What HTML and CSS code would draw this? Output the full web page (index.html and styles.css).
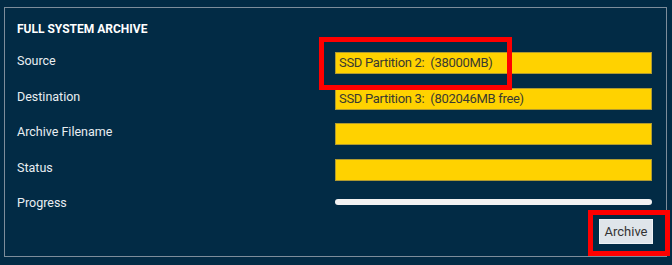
FILE: index.html
```html
<!DOCTYPE html>
<html lang="en">
<head>
    <meta charset="UTF-8">
    <meta name="viewport" content="width=device-width, initial-scale=1.0">
    <title>Full System Archive</title>
    <link rel="stylesheet" href="styles.css">
</head>
<body>
    <div class="panel">
        <h1 class="panel-title">FULL SYSTEM ARCHIVE</h1>

        <div class="form">
            <label class="form-label">Source</label>
            <div class="field">SSD Partition 2:&nbsp; (38000MB)</div>

            <label class="form-label">Destination</label>
            <div class="field">SSD Partition 3:&nbsp; (802046MB free)</div>

            <label class="form-label">Archive Filename</label>
            <div class="field"></div>

            <label class="form-label">Status</label>
            <div class="field"></div>

            <label class="form-label">Progress</label>
            <div class="progress"><div class="progress-fill" style="width: 100%"></div></div>
        </div>

        <div class="actions">
            <button class="btn">Archive</button>
        </div>
    </div>

    <!-- highlight annotations -->
    <div class="mark mark-source"></div>
    <div class="mark mark-button"></div>
</body>
</html>
```

FILE: styles.css
```css
body {
    margin: 0;
    background-color: #022b45;
    font-family: Roboto, "Liberation Sans", sans-serif;
    color: #e9eef2;
}
.panel {
    margin: 7px 0 0 4px;
    width: 636px;
    height: 235px;
    padding: 13px 13px 0 12px;
    border: 1px solid #7d8d9b;
}
.panel-title {
    margin: 0 0 15px 0;
    font-size: 12px;
    line-height: 16px;
    font-weight: 700;
    color: #ffffff;
}
.form {
    display: grid;
    grid-template-columns: 318px 317px;
    grid-auto-rows: 22px;
    row-gap: 13.5px;
}
.form-label {
    font-size: 12.5px;
    line-height: 18px;
}
.field {
    box-sizing: border-box;
    height: 22px;
    padding: 0 3px;
    background-color: #ffd200;
    border: 1px solid #b09a30;
    color: #3a3a30;
    font-size: 13px;
    letter-spacing: -0.3px;
    line-height: 20px;
}
.progress {
    margin-top: 4.5px;
    height: 6px;
    border-radius: 3px;
    background-color: #d9dde0;
    overflow: hidden;
}
.progress-fill {
    height: 100%;
    background-color: #f2f2f2;
}
.actions {
    display: flex;
    justify-content: flex-end;
    margin-top: 2.5px;
}
.btn {
    width: 54px;
    height: 25px;
    padding: 0;
    background-color: #dfe5ea;
    border: 1px solid #eef2f5;
    color: #333333;
    font-family: Roboto, "Liberation Sans", sans-serif;
    font-size: 13px;
}
.mark {
    position: absolute;
    box-sizing: border-box;
    border: 5px solid #ff0000;
}
.mark-source {
    left: 319px;
    top: 37px;
    width: 193px;
    height: 53px;
}
.mark-button {
    left: 588px;
    top: 210px;
    width: 82px;
    height: 46px;
}
```
